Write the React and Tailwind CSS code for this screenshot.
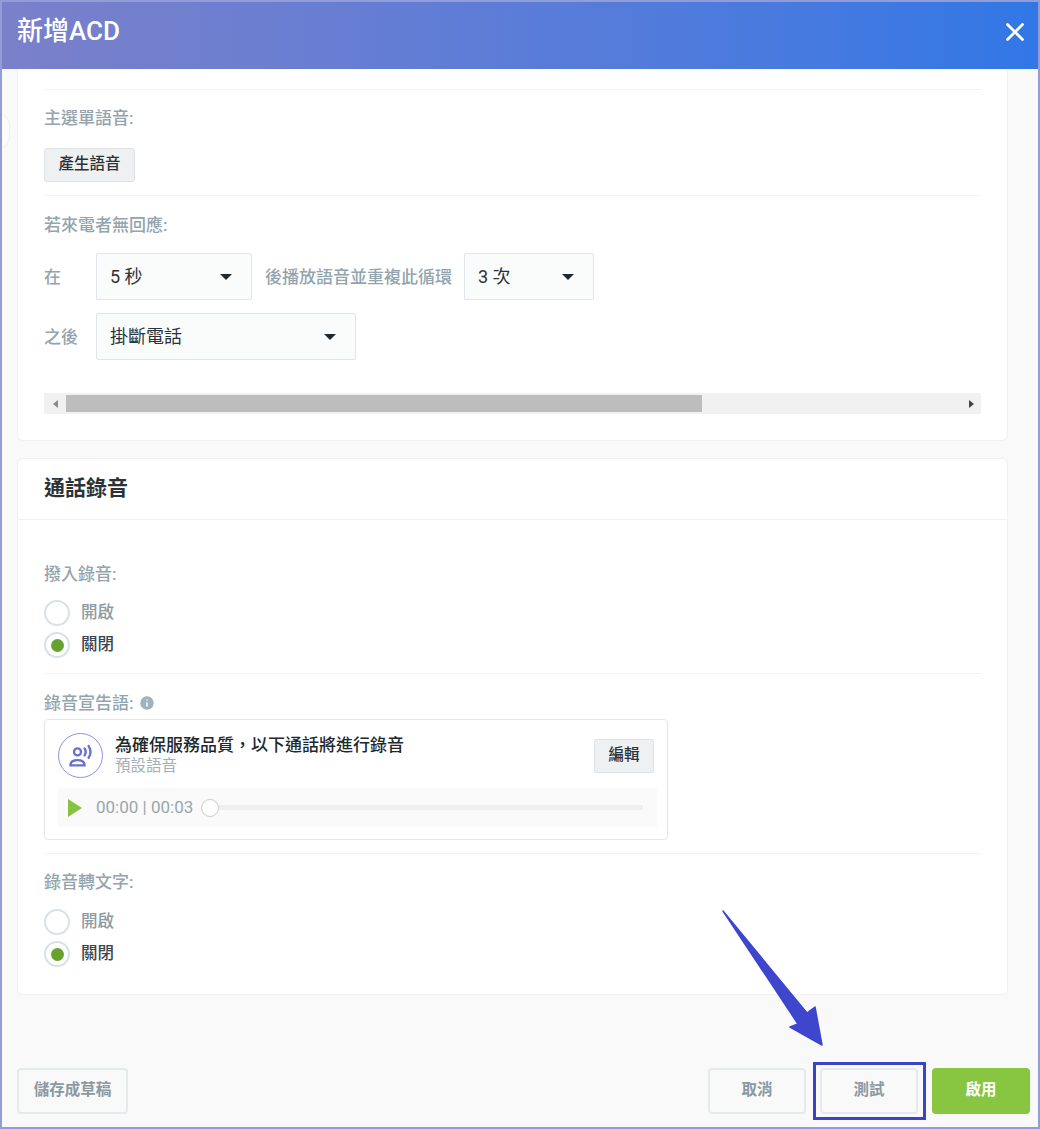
import React from "react";
import { X, Info } from "lucide-react";

const Label = ({ children }) => (
  <div className="text-[17px] leading-[22px] font-medium text-[#93a4ad]">{children}</div>
);

const Divider = () => <div className="h-px bg-[#f1f2f3]" />;

const Select = ({ value, width }) => (
  <div className={`${width} h-[47px] flex items-center justify-between pl-[13px] rounded-[2px] border border-[#dfe5e8] bg-[#fafbfb] text-[18px] text-[#2c3338]`}>
    <span>{value}</span>
    <span className="w-0 h-0 border-x-[6px] border-x-transparent border-t-[6px] border-t-[#1f2a30] mr-[19px]" />
  </div>
);

const Radio = ({ label, checked }) => (
  <div className="flex items-center h-[32px]">
    <div className="w-[26px] h-[26px] rounded-full border-2 border-[#d8e2e4] bg-white flex items-center justify-center">
      {checked && <div className="w-[13px] h-[13px] rounded-full bg-[#66a22e]" />}
    </div>
    <span className={`ml-[11px] text-[16.5px] font-medium ${checked ? "text-[#3a464e]" : "text-[#8d9ba3]"}`}>{label}</span>
  </div>
);

const FooterButton = ({ children, className }) => (
  <button className={`h-[46px] rounded-[4px] text-[15.5px] font-bold ${className}`}>{children}</button>
);

export default function App() {
  return (
    <div className="w-[1040px] h-[1129px] relative overflow-hidden flex flex-col border-2 border-[#929cd9] bg-[#f9f9f9] font-['Roboto','Noto_Sans_CJK_TC',sans-serif]">
      {/* Header */}
      <div className="h-[67px] shrink-0 flex items-center justify-between pl-[15px] pr-[8px] pb-[8px] bg-gradient-to-r from-[#7b80c9] to-[#3077e6]">
        <h1 className="text-[26px] font-medium text-white">新增ACD</h1>
        <X className="w-[30px] h-[30px] text-white" strokeWidth={2.2} />
      </div>

      <div className="flex-1 flex flex-col pl-[15px] pr-[30px]">
        {/* Voice menu card */}
        <div className="h-[372px] shrink-0 bg-white rounded-b-[6px] border border-t-0 border-[#f0f1f2] px-[26px] pt-[20px]">
          <Divider />
          <div className="mt-[17px]"><Label>主選單語音:</Label></div>
          <button className="mt-[19px] block w-[91px] h-[34px] rounded-[3px] border border-[#dce2e5] bg-[#eef0f1] text-[15.5px] font-medium text-[#2c3338]">產生語音</button>
          <div className="mt-[13px]"><Divider /></div>
          <div className="mt-[18px]"><Label>若來電者無回應:</Label></div>

          <div className="mt-[17px] flex items-center">
            <div className="w-[52px]"><Label>在</Label></div>
            <Select value="5 秒" width="w-[156px]" />
            <div className="ml-[13px] mr-[12px]"><Label>後播放語音並重複此循環</Label></div>
            <Select value="3 次" width="w-[130px]" />
          </div>
          <div className="mt-[13px] flex items-center">
            <div className="w-[52px]"><Label>之後</Label></div>
            <Select value="掛斷電話" width="w-[260px]" />
          </div>

          {/* Horizontal scrollbar */}
          <div className="mt-[33px] h-[21px] flex items-center bg-[#f1f1f1]">
            <div className="w-[22px] flex justify-center">
              <span className="w-0 h-0 border-y-[4px] border-y-transparent border-r-[5px] border-r-[#8a8a8a]" />
            </div>
            <div className="w-[636px] h-[17px] bg-[#bdbdbd]" />
            <div className="flex-1 flex justify-end pr-[7px]">
              <span className="w-0 h-0 border-y-[4px] border-y-transparent border-l-[5px] border-l-[#444]" />
            </div>
          </div>
        </div>

        {/* Call recording card */}
        <div className="mt-[17px] h-[537px] shrink-0 bg-white rounded-[6px] border border-[#f0f1f2]">
          <div className="h-[61px] flex items-center px-[26px] border-b border-[#f0f1f2]">
            <h2 className="text-[21px] font-bold text-[#2c3338]">通話錄音</h2>
          </div>
          <div className="px-[26px]">
            <div className="mt-[43px]"><Label>撥入錄音:</Label></div>
            <div className="mt-[12px]">
              <Radio label="開啟" />
              <Radio label="關閉" checked />
            </div>
            <div className="mt-[12px]"><Divider /></div>
            <div className="mt-[18px] flex items-center gap-[5px]">
              <Label>錄音宣告語:</Label>
              <Info className="w-[18px] h-[18px] text-white fill-[#9fb2bd]" strokeWidth={2} />
            </div>

            {/* Announcement box */}
            <div className="mt-[5px] w-[624px] h-[121px] rounded-[4px] border border-[#e4e6e8] bg-white pl-[13px] pr-[10px] pt-[13px]">
              <div className="flex items-center">
                <div className="w-[45px] h-[45px] rounded-full border border-[#8f93dc] flex items-center justify-center">
                  <svg viewBox="0 0 24 24" className="w-[28px] h-[28px]" fill="none" stroke="#6a6fd0" strokeWidth="2" strokeLinecap="round">
                    <circle cx="9" cy="8.5" r="3" />
                    <path d="M3 20c0-3 2.5-4.5 6-4.5s6 1.5 6 4.5z" />
                    <path d="M15 5.5c1.2 1.7 1.2 4.3 0 6" />
                    <path d="M18.5 3.5c2 3 2 7 0 10" />
                  </svg>
                </div>
                <div className="ml-[12px] flex-1">
                  <div className="text-[17px] leading-[22px] font-medium text-[#20282d] -mt-[2px]">為確保服務品質，以下通話將進行錄音</div>
                  <div className="text-[15.5px] leading-[20px] text-[#a3b0b7]">預設語音</div>
                </div>
                <button className="mr-[3px] w-[60px] h-[34px] rounded-[3px] border border-[#dce2e5] bg-[#eef0f1] text-[15.5px] font-medium text-[#2c3338]">編輯</button>
              </div>
              <div className="mt-[10px] h-[39px] bg-[#fafafa] flex items-center pl-[10px] pr-[14px]">
                <span className="w-0 h-0 border-y-[9px] border-y-transparent border-l-[14px] border-l-[#86c440]" />
                <span className="ml-[14px] text-[17px] text-[#98a6ae]">00:00 | 00:03</span>
                <div className="ml-[8px] w-[18px] h-[18px] shrink-0 rounded-full border border-[#c9cdd0] bg-white" />
                <div className="flex-1 h-[5px] bg-[#eeeff0]" />
              </div>
            </div>

            <div className="mt-[13px]"><Divider /></div>
            <div className="mt-[17px]"><Label>錄音轉文字:</Label></div>
            <div className="mt-[13px]">
              <Radio label="開啟" />
              <Radio label="關閉" checked />
            </div>
          </div>
        </div>

        {/* Footer */}
        <div className="mt-[73px] -mr-[22px] flex items-center">
          <FooterButton className="w-[111px] border-2 border-[#e4e9ec] text-[#8a9aa3]">儲存成草稿</FooterButton>
          <div className="ml-auto flex gap-[14px]">
            <FooterButton className="w-[98px] border-2 border-[#e4e9ec] text-[#8a9aa3]">取消</FooterButton>
            <FooterButton className="w-[98px] border-2 border-[#e4e9ec] text-[#8a9aa3]">測試</FooterButton>
            <FooterButton className="w-[98px] bg-[#88c540] text-white">啟用</FooterButton>
          </div>
        </div>
      </div>

      {/* Faint collapse handle on the left edge */}
      <div className="absolute -left-[16px] top-[111px] w-[24px] h-[36px] rounded-full border border-[#f0f0f0] bg-[#fbfbfb]" />

      {/* Annotation laid over the screenshot */}
      <div className="absolute left-[811px] top-[1060px] w-[113px] h-[58px] border-[3px] border-[#3a44c6]" />
      <svg className="absolute left-[718px] top-[905px]" width="110" height="140" viewBox="0 0 110 140">
        <path d="M3 4 L87 106 L95 100 L102 138 L70 120 L78 117 Z" fill="#3d46cc" stroke="#3d46cc" strokeWidth="1.5" strokeLinejoin="round" />
      </svg>
    </div>
  );
}
